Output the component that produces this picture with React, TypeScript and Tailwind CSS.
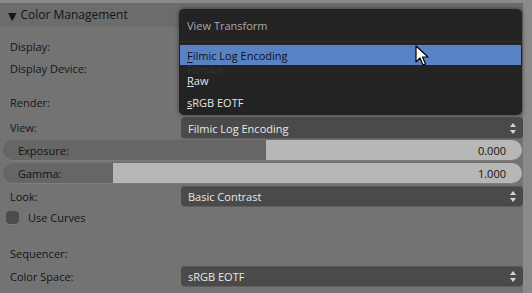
import React from 'react';

const font = { fontFamily: '"Open Sans", "DejaVu Sans", sans-serif' };

function UpDown() {
  return (
    <svg width="8" height="13" viewBox="0 0 8 13" className="shrink-0">
      <path d="M4 1 L7 5 L1 5 Z" fill="#d6d6d6" />
      <path d="M4 12 L7 8 L1 8 Z" fill="#d6d6d6" />
    </svg>
  );
}

function Field({ value, h = 'h-[21px]' }: { value: string; h?: string }) {
  return (
    <div
      className={`ml-auto w-[342px] ${h} rounded-[4px] bg-[#4a4a4a] border-t border-[#555] shadow-[0_1px_0_#5e5e5e] flex items-center pl-[7px] pr-[6px] text-[#e8e8e8]`}
    >
      <span className="flex-1">{value}</span>
      <UpDown />
    </div>
  );
}

function Slider({ label, value, fillFrom }: { label: string; value: string; fillFrom: number }) {
  return (
    <div className="ml-[3px] w-[519px] h-[20px] rounded-full bg-[#656565] overflow-hidden flex relative shadow-[0_1px_0_#7d7d7d]">
      <div className="shrink-0 bg-[#666666]" style={{ width: fillFrom }} />
      <div className="flex-1 bg-[#b7b7b7]" />
      <span className="absolute left-[15px] top-0 h-full flex items-center text-[#111]">{label}</span>
      <span className="absolute right-[16px] top-0 h-full flex items-center text-[#111]">{value}</span>
    </div>
  );
}

function Cursor() {
  return (
    <svg width="14" height="22" viewBox="0 0 14 22" className="absolute left-[415px] top-[45px]">
      <path
        d="M1 1 L1 17 L5 13 L8 20 L10.5 19 L7.5 12 L13 12 Z"
        fill="#ffffff"
        stroke="#000000"
        strokeWidth="1.2"
        strokeLinejoin="round"
      />
    </svg>
  );
}

export default function App() {
  return (
    <div
      className="relative w-[532px] h-[293px] overflow-hidden bg-[#8a8a8a] text-[11px] leading-none"
      style={font}
    >
      <div className="absolute left-0 top-[3px] w-[523px] h-[290px] bg-[#737373]">
        {/* Panel header */}
        <div className="h-[24px] bg-[#6c6c6c] flex items-center pl-[8px] text-[12px] text-[#151515]">
          <span className="text-[11px] mr-[4px]">▼</span>
          Color Management
        </div>

        <div className="pt-[8px] text-[#151515]">
          <div className="h-[22px] flex items-center pl-[10px]">Display:</div>
          <div className="h-[23px] flex items-center pl-[10px]">
            Display Device:
            <span className="ml-auto mr-[4px] text-[#5a5a5a] text-[9px]">▼</span>
          </div>

          <div className="h-[22px] mt-[11px] flex items-center pl-[10px]">Render:</div>
          <div className="h-[21px] mt-[4px] flex items-center pl-[10px]">
            View:
            <Field value="Filmic Log Encoding" />
          </div>

          <div className="mt-[2px]">
            <Slider label="Exposure:" value="0.000" fillFrom={263} />
          </div>
          <div className="mt-[3px]">
            <Slider label="Gamma:" value="1.000" fillFrom={110} />
          </div>

          <div className="h-[20px] mt-[3px] flex items-center pl-[10px]">
            Look:
            <Field value="Basic Contrast" h="h-[20px]" />
          </div>

          <div className="h-[20px] mt-[1px] flex items-center pl-[6px] gap-[9px]">
            <div className="w-[13px] h-[13px] rounded-[4px] bg-[#4c4c4c] shadow-[0_1px_0_#7e7e7e]" />
            Use Curves
          </div>

          <div className="h-[20px] mt-[16px] flex items-center pl-[10px]">Sequencer:</div>
          <div className="h-[20px] mt-[3px] flex items-center pl-[10px]">
            Color Space:
            <Field value="sRGB EOTF" h="h-[20px]" />
          </div>
        </div>
      </div>

      {/* View Transform popup */}
      <div className="absolute left-[179px] top-[9px] w-[343px] h-[106px] rounded-[5px] bg-[#232323] shadow-[0_0_4px_rgba(0,0,0,0.5)]">
        <div className="h-[32px] flex items-center pl-[8px] text-[#a9a9a9]">View Transform</div>
        <div className="h-px bg-[#3a2d27]" />
        <div className="h-[3px]" />
        <div className="h-[20px] ml-px mr-px bg-[#5882c4] flex items-center pl-[7px] text-[#0c1220]">
          <span className="underline underline-offset-2">F</span>ilmic Log Encoding
        </div>
        <div className="h-[10px] pl-[8px] text-[10px] leading-[10px] text-[#363636]">Filmlike</div>
        <div className="h-[11px] pl-[8px] text-[#e6e6e6]">
          <span className="underline underline-offset-1">R</span>aw
        </div>
        <div className="h-[11px]" />
        <div className="h-[11px] pl-[8px] text-[#e6e6e6]">
          <span className="underline underline-offset-1">s</span>RGB EOTF
        </div>
      </div>

      <Cursor />
    </div>
  );
}
